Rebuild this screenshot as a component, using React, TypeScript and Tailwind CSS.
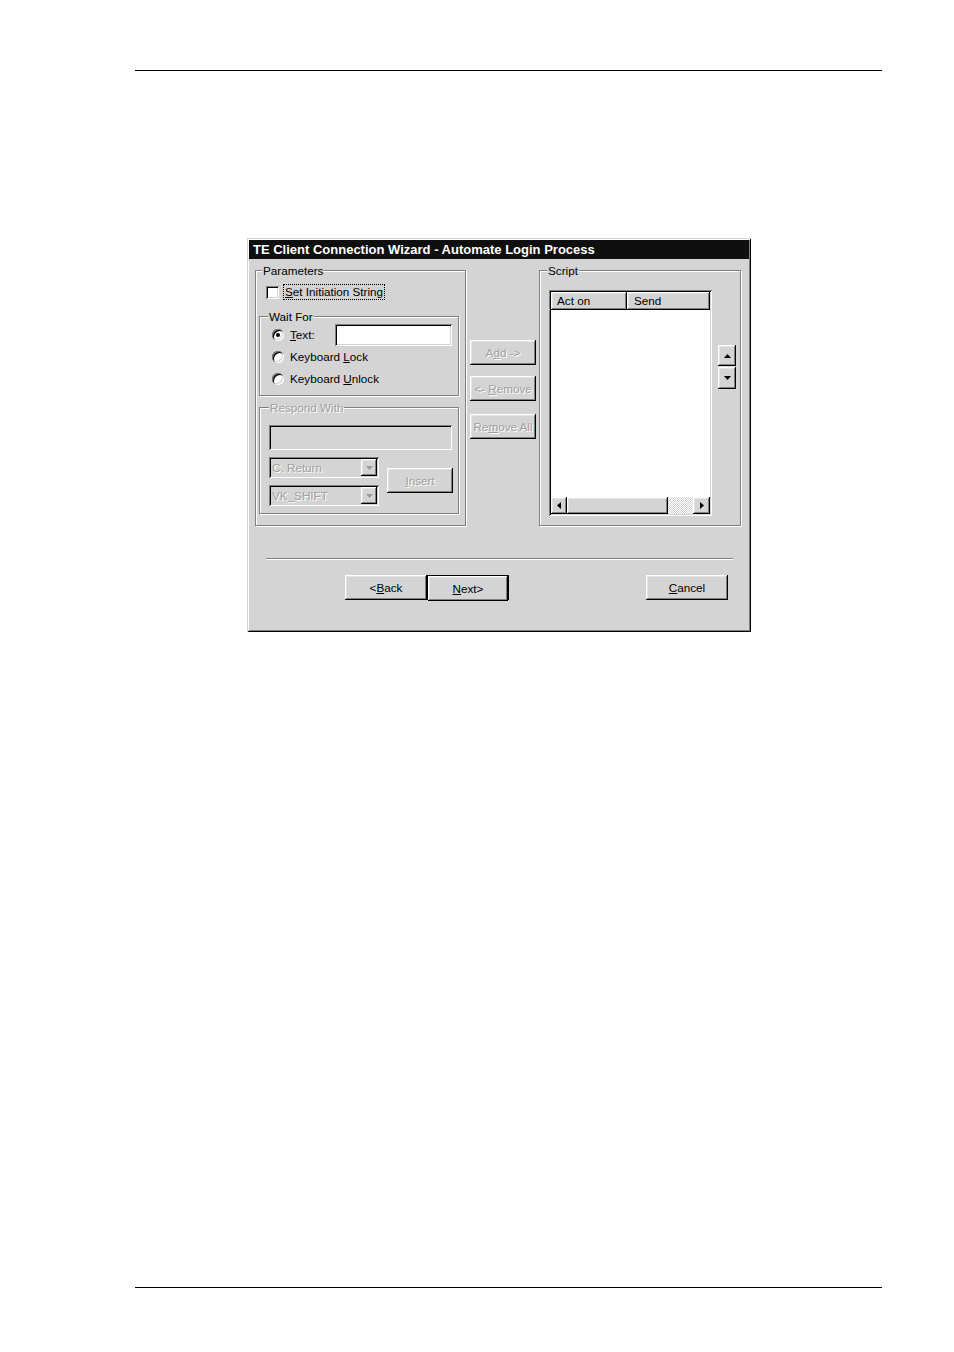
import type { ReactNode } from 'react'

const raised =
  'bg-[#d4d4d4] shadow-[inset_-1px_-1px_0_#000,inset_1px_1px_0_#fff,inset_-2px_-2px_0_#808080,inset_2px_2px_0_#e4e4e4]'
const sunken =
  'shadow-[inset_1px_1px_0_#808080,inset_-1px_-1px_0_#fff,inset_2px_2px_0_#000,inset_-2px_-2px_0_#d4d4d4]'
const etched = 'border border-[#808080] shadow-[inset_1px_1px_0_#fff,1px_1px_0_#fff]'
const dim = 'text-[#a0a0a0] [text-shadow:1px_1px_0_#fff]'

function Radio({ checked }: { checked?: boolean }) {
  return (
    <span className="w-[12px] h-[12px] rounded-full bg-white shrink-0 flex items-center justify-center shadow-[inset_1px_1px_0_#808080,inset_-1px_-1px_0_#fff,inset_2px_2px_0_#000,inset_-2px_-2px_0_#d4d4d4]">
      {checked && <span className="w-[4px] h-[4px] rounded-full bg-black" />}
    </span>
  )
}

function Arrow({ dir, color = '#000' }: { dir: 'up' | 'down' | 'left' | 'right'; color?: string }) {
  const pts = {
    up: '3.5,0 7,4 0,4',
    down: '0,0 7,0 3.5,4',
    left: '4,0 4,7 0,3.5',
    right: '0,0 4,3.5 0,7',
  }[dir]
  const vertical = dir === 'up' || dir === 'down'
  return (
    <svg width={vertical ? 7 : 4} height={vertical ? 4 : 7} viewBox={vertical ? '0 0 7 4' : '0 0 4 7'}>
      <polygon points={pts} fill={color} />
    </svg>
  )
}

function Button({ children, className = '', disabled }: { children: ReactNode; className?: string; disabled?: boolean }) {
  return (
    <div className={`${raised} h-[25px] flex items-center justify-center ${disabled ? dim : ''} ${className}`}>
      {children}
    </div>
  )
}

function Combo({ value }: { value: string }) {
  return (
    <div className={`${sunken} bg-[#d4d4d4] h-[21px] w-[110px] flex items-center pl-[3px] pr-[2px]`}>
      <span className={`flex-1 ${dim}`}>{value}</span>
      <span className={`${raised} w-[16px] h-[17px] flex items-center justify-center`}>
        <Arrow dir="down" color="#9a9a9a" />
      </span>
    </div>
  )
}

function Group({ label, className = '', dimLabel, labelGap, children }: {
  label: string
  className?: string
  dimLabel?: boolean
  labelGap: string
  children: ReactNode
}) {
  return (
    <fieldset className={`${etched} m-0 p-0 min-w-0 ${className}`}>
      <legend className={`${labelGap} px-px bg-[#d4d4d4] leading-[13px] ${dimLabel ? dim : ''}`}>{label}</legend>
      {children}
    </fieldset>
  )
}

export default function App() {
  return (
    <div className="w-[954px] h-[1352px] bg-white overflow-hidden pt-[70px] font-['Liberation_Sans',Arial,sans-serif] text-[11.7px] text-black">
      <div className="ml-[135px] w-[747px] h-px bg-black" />

      {/* dialog */}
      <div className="ml-[247px] mt-[167px] w-[504px] h-[394px] p-[2px] bg-[#d4d4d4] flex flex-col shadow-[inset_1px_1px_0_#d4d4d4,inset_-1px_-1px_0_#000,inset_2px_2px_0_#fff,inset_-2px_-2px_0_#808080]">
        <div className="h-[19px] bg-[#0f0f0f] text-white text-[13px] font-bold leading-[19px] pl-[4px] whitespace-nowrap">
          TE Client Connection Wizard - Automate Login Process
        </div>

        <div className="mt-[5px] flex items-start">
          {/* Parameters */}
          <Group label="Parameters" labelGap="ml-[6px]" className="ml-[6px] w-[211px] h-[262px]">
            <div className="mt-[7px] ml-[10px] flex items-center">
              <span className={`${sunken} bg-white w-[13px] h-[13px] shrink-0`} />
              <span className="ml-[4px] px-px border border-dotted border-black leading-[14px]">
                <u>S</u>et Initiation String
              </span>
            </div>

            <Group label="Wait For" labelGap="ml-[8px]" className="ml-[3px] mt-[10px] w-[200px] h-[86px]">
              <div className="mt-[1px] ml-[12px] h-[22px] flex items-center">
                <Radio checked />
                <span className="ml-[6px] w-[45px]">
                  <u>T</u>ext:
                </span>
                <span className={`${sunken} bg-white w-[117px] h-[22px]`} />
              </div>
              <div className="mt-[3px] ml-[12px] h-[16px] flex items-center">
                <Radio />
                <span className="ml-[6px]">
                  Keyboard <u>L</u>ock
                </span>
              </div>
              <div className="mt-[6px] ml-[12px] h-[16px] flex items-center">
                <Radio />
                <span className="ml-[6px]">
                  Keyboard <u>U</u>nlock
                </span>
              </div>
            </Group>

            <Group label="Respond With" dimLabel labelGap="ml-[9px]" className="ml-[3px] mt-[5px] w-[200px] h-[113px]">
              <div className={`${sunken} bg-[#d4d4d4] ml-[9px] mt-[11px] w-[183px] h-[25px]`} />
              <div className="ml-[9px] mt-[7px] flex items-start">
                <div className="flex flex-col gap-[7px]">
                  <Combo value="C. Return" />
                  <Combo value="VK_SHIFT" />
                </div>
                <Button disabled className="ml-[8px] mt-[11px] w-[66px]">
                  <span>
                    <u>I</u>nsert
                  </span>
                </Button>
              </div>
            </Group>
          </Group>

          {/* middle buttons */}
          <div className="ml-[4px] mt-[76px] flex flex-col w-[66px]">
            <Button disabled>
              <span>
                A<u>d</u>d -&gt;
              </span>
            </Button>
            <Button disabled className="mt-[11px]">
              <span>
                &lt;- <u>R</u>emove
              </span>
            </Button>
            <Button disabled className="mt-[13px]">
              <span>
                Re<u>m</u>ove All
              </span>
            </Button>
          </div>

          {/* Script */}
          <Group label="Script" labelGap="ml-[7px]" className="ml-[3px] w-[202px] h-[262px]">
            <div className="flex items-start ml-[9px] mt-[13px]">
              <div className={`${sunken} bg-white w-[163px] h-[226px] p-[2px] flex flex-col`}>
                <div className="flex h-[18px]">
                  <div className={`${raised} w-[76px] pl-[6px] leading-[18px]`}>Act on</div>
                  <div className={`${raised} flex-1 pl-[7px] leading-[18px]`}>Send</div>
                </div>
                <div className="flex-1 bg-white" />
                <div className="flex h-[17px]">
                  <div className={`${raised} w-[16px] flex items-center justify-center`}>
                    <Arrow dir="left" />
                  </div>
                  <div className={`${raised} w-[101px]`} />
                  <div className="flex-1 bg-[image:repeating-conic-gradient(#fff_0_25%,#d4d4d4_0_50%)] bg-[length:2px_2px]" />
                  <div className={`${raised} w-[17px] flex items-center justify-center`}>
                    <Arrow dir="right" />
                  </div>
                </div>
              </div>
              <div className="ml-[6px] mt-[55px] flex flex-col w-[18px]">
                <div className={`${raised} h-[21px] flex items-center justify-center`}>
                  <Arrow dir="up" />
                </div>
                <div className={`${raised} mt-px h-[22px] flex items-center justify-center`}>
                  <Arrow dir="down" />
                </div>
              </div>
            </div>
          </Group>
        </div>

        {/* separator */}
        <div className="ml-[17px] mt-[32px] w-[467px]">
          <div className="h-px bg-[#808080]" />
          <div className="h-px bg-white" />
        </div>

        <div className="mt-[15px] flex">
          <Button className="ml-[96px] w-[82px]">
            <span>
              &lt;<u>B</u>ack
            </span>
          </Button>
          <div className="border border-black w-[82px] h-[25px] flex">
            <Button className="w-full h-[23px]">
              <span>
                <u>N</u>ext&gt;
              </span>
            </Button>
          </div>
          <Button className="ml-[137px] w-[82px]">
            <span>
              <u>C</u>ancel
            </span>
          </Button>
        </div>
      </div>

      <div className="ml-[135px] mt-[655px] w-[747px] h-px bg-black" />
    </div>
  )
}
